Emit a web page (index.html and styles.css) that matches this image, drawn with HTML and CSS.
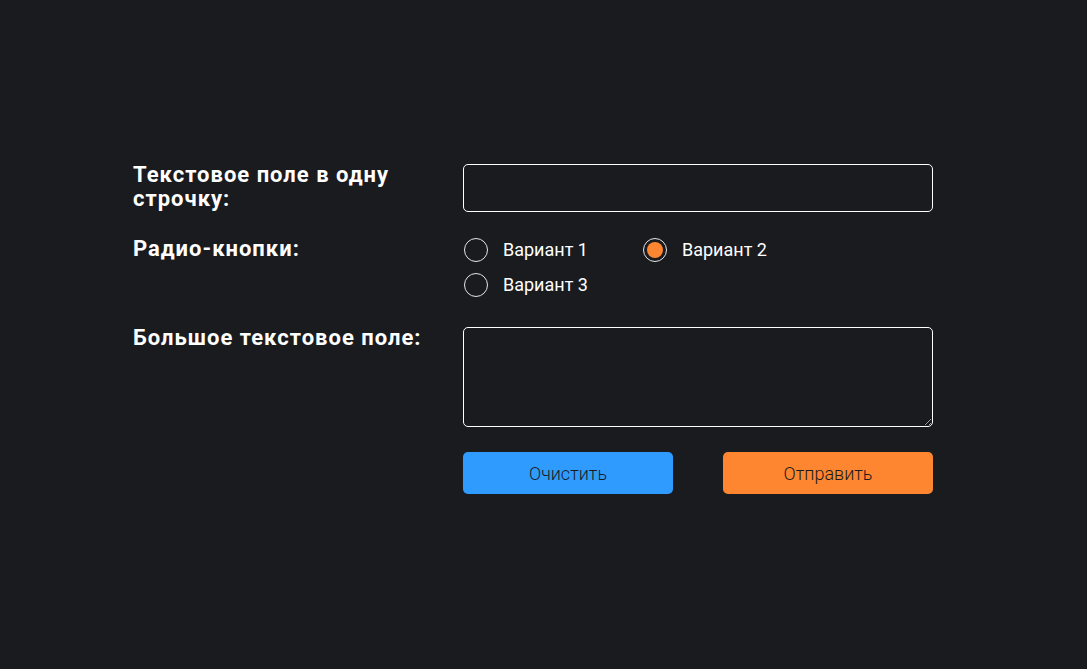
FILE: index.html
```html
<!DOCTYPE html>
<html lang="ru">
<head>
<meta charset="utf-8">
<title>Форма</title>
<link rel="stylesheet" href="styles.css">
</head>
<body>
<main class="page">
  <form class="form">
    <label class="label" for="line">Текстовое поле в одну строчку:</label>
    <input class="field" id="line" type="text">

    <div class="label">Радио-кнопки:</div>
    <div class="radios">
      <label class="radio"><input type="radio" name="opt"><span class="dot"></span><span class="radio-text">Вариант 1</span></label>
      <label class="radio"><input type="radio" name="opt" checked><span class="dot"></span><span class="radio-text">Вариант 2</span></label>
      <label class="radio"><input type="radio" name="opt"><span class="dot"></span><span class="radio-text">Вариант 3</span></label>
    </div>

    <label class="label" for="big">Большое текстовое поле:</label>
    <textarea class="field area" id="big"></textarea>

    <div class="spacer"></div>
    <div class="buttons">
      <button type="reset" class="btn btn-clear">Очистить</button>
      <button type="submit" class="btn btn-send">Отправить</button>
    </div>
  </form>
</main>
</body>
</html>
```

FILE: styles.css
```css
html, body {
  margin: 0;
  padding: 0;
  background: #1a1b1f;
  height: 100%;
}
body {
  font-family: Roboto, "Liberation Sans", sans-serif;
  color: #ffffff;
}
.page {
  padding-top: 164px;
  padding-left: 133px;
}
.form {
  display: grid;
  grid-template-columns: 330px 470px;
  row-gap: 26px;
}
.label {
  font-size: 22px;
  font-weight: 700;
  line-height: 24px;
  letter-spacing: 1px;
  color: #ffffff;
  padding-right: 20px;
  margin-top: -1px;
}
.field {
  box-sizing: border-box;
  width: 470px;
  height: 48px;
  background: transparent;
  border: 1px solid #ffffff;
  border-radius: 5px;
  color: #fff;
  font-family: inherit;
  font-size: 18px;
  padding: 0 12px;
  margin: 0;
  outline: none;
  display: block;
}
.area {
  height: 100px;
  resize: vertical;
  padding: 10px 12px;
  color-scheme: dark;
}
.radios {
  display: flex;
  flex-wrap: wrap;
  row-gap: 11px;
  margin-bottom: 4px;
}
.radio {
  width: 179px;
  display: flex;
  align-items: center;
  height: 24px;
  cursor: pointer;
}
.radio input {
  position: absolute;
  opacity: 0;
  width: 0;
  height: 0;
}
.dot {
  box-sizing: border-box;
  width: 24px;
  height: 24px;
  border-radius: 50%;
  border: 1.5px solid #e6e6e6;
  margin-left: 1px;
  margin-right: 15px;
  flex: none;
  display: flex;
  align-items: center;
  justify-content: center;
}
.radio input:checked + .dot::after {
  content: "";
  width: 16px;
  height: 16px;
  border-radius: 50%;
  background: #ff8630;
}
.radio-text {
  font-size: 18px;
  font-weight: 400;
  line-height: 24px;
  color: #ffffff;
}
.buttons {
  display: flex;
  justify-content: space-between;
  margin-top: -1px;
}
.btn {
  width: 210px;
  height: 42px;
  border: none;
  border-radius: 5px;
  font-family: inherit;
  font-size: 18px;
  font-weight: 300;
  color: #1a1b1f;
  cursor: pointer;
  padding: 0;
}
.btn-clear { background: #2f9bff; }
.btn-send { background: #ff8630; }
```
